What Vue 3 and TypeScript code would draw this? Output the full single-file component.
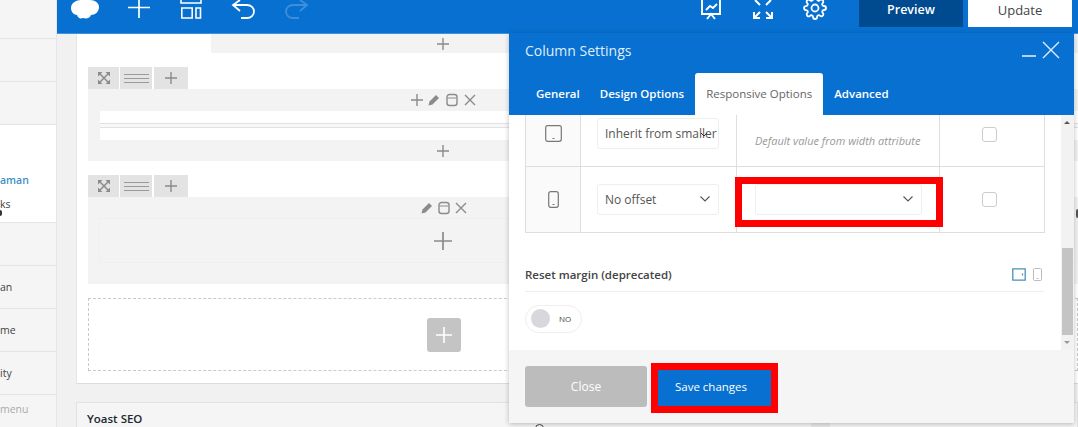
<script setup lang="ts">
const sideTop = [1, 2, 3]
const sideBottom = ['an', 'me', 'ity']
const tabs = ['General', 'Design Options', 'Responsive Options', 'Advanced']
const gearPath = 'M19.4 15a1.65 1.65 0 0 0 .33 1.82l.06.06a2 2 0 0 1 0 2.83 2 2 0 0 1-2.83 0l-.06-.06a1.65 1.65 0 0 0-1.82-.33 1.65 1.65 0 0 0-1 1.51V21a2 2 0 0 1-2 2 2 2 0 0 1-2-2v-.09A1.65 1.65 0 0 0 9 19.4a1.65 1.65 0 0 0-1.82.33l-.06.06a2 2 0 0 1-2.83 0 2 2 0 0 1 0-2.83l.06-.06a1.65 1.65 0 0 0 .33-1.82 1.65 1.65 0 0 0-1.51-1H3a2 2 0 0 1-2-2 2 2 0 0 1 2-2h.09A1.65 1.65 0 0 0 4.6 9a1.65 1.65 0 0 0-.33-1.82l-.06-.06a2 2 0 0 1 0-2.83 2 2 0 0 1 2.83 0l.06.06a1.65 1.65 0 0 0 1.82.33H9a1.65 1.65 0 0 0 1-1.51V3a2 2 0 0 1 2-2 2 2 0 0 1 2 2v.09a1.65 1.65 0 0 0 1 1.51 1.65 1.65 0 0 0 1.82-.33l.06-.06a2 2 0 0 1 2.83 0 2 2 0 0 1 0 2.83l-.06.06a1.65 1.65 0 0 0-.33 1.82V9a1.65 1.65 0 0 0 1.51 1H21a2 2 0 0 1 2 2 2 2 0 0 1-2 2h-.09a1.65 1.65 0 0 0-1.51 1z'
</script>

<template>
  <div class="page">
    <aside class="side">
      <div v-for="s in sideTop" :key="s" class="side-row"></div>
      <div class="side-white">
        <span class="side-link">aman</span>
        <span class="side-ks">ks</span>
        <i class="side-dot"></i>
      </div>
      <div class="side-row"></div>
      <div v-for="s in sideBottom" :key="s" class="side-row labelled">{{ s }}</div>
      <div class="side-menu">menu</div>
    </aside>

    <div class="main">
      <header class="topbar">
        <div class="tools">
          <svg width="28" height="20" viewBox="0 0 28 20"><path d="M0 8C0 3 5 0 10 0h9c5 0 9 3 9 7 0 5-4 8-8 8-1 3-4 4-8 3-3 1-5 0-6-3-3 0-6-3-6-7z" fill="#fff" /></svg>
          <svg width="24" height="24" viewBox="0 0 24 24"><path d="M12 0v18M1 7.500h22" stroke="#fff" stroke-width="1.700" fill="none" /></svg>
          <svg width="24" height="24" viewBox="0 0 24 24"><path d="M2 0v3h20V0M2.800 8h10.400v10H2.800zM17 8h4.500v10H17z" stroke="#fff" stroke-width="1.600" fill="none" /></svg>
          <svg width="26" height="24" viewBox="0 0 26 24"><path d="M9 0 2 5l7 6M2 5h14c4 0 7 3 7 6.500S20 18 16 18h-6" stroke="#fff" stroke-width="1.800" fill="none" /></svg>
          <svg width="26" height="24" viewBox="0 0 26 24"><path d="m17 0 7 5-7 6M24 5H10c-4 0-7 3-7 6.500S6 18 10 18h6" stroke="#3d8fdc" stroke-width="1.800" fill="none" /></svg>
        </div>
        <div class="actions">
          <svg width="24" height="24" viewBox="0 0 24 24"><path d="M3 0v14h18V0M7 10l4-4 3 2 4-4M8 19l4-5 4 5" stroke="#fff" stroke-width="1.900" fill="none" /></svg>
          <svg width="24" height="24" viewBox="0 0 24 24"><path d="M9 5 4 0M15 5l5-5M3 12v6h6M3 18l6-6M21 12v6h-6M21 18l-6-6" stroke="#fff" stroke-width="2" fill="none" /></svg>
          <svg width="24" height="24" viewBox="0 4 24 24"><circle cx="12" cy="12" r="3.500" stroke="#fff" stroke-width="1.800" fill="none" /><path :d="gearPath" stroke="#fff" stroke-width="1.800" fill="none" /></svg>
          <button class="preview"><span>Preview</span></button>
          <button class="update"><span>Update</span></button>
        </div>
      </header>

      <div class="work">
        <section class="card">
          <div class="top-band">
            <svg width="12" height="12" viewBox="0 0 12 12"><path d="M6 0v12M0 6h12" stroke="#8b8b8b" stroke-width="1.400" /></svg>
          </div>

          <div class="group">
            <div class="grip">
              <span class="g-btn expand"><svg width="12" height="12" viewBox="0 0 12 12"><path d="M0 0h4.500L0 4.500zM12 0H7.500L12 4.500zM0 12h4.500L0 7.500zM12 12H7.500l4.500-4.500z" fill="#8b8b8b" /><path d="m2 2 8 8M10 2l-8 8" stroke="#8b8b8b" stroke-width="1.500" /></svg></span>
              <span class="g-btn lines"><i></i><i></i><i></i></span>
              <span class="g-btn add"><svg width="12" height="12" viewBox="0 0 12 12"><path d="M6 0v12M0 6h12" stroke="#8b8b8b" stroke-width="1.400" /></svg></span>
            </div>
            <div class="block">
              <div class="block-tools">
                <svg width="12" height="12" viewBox="0 0 12 12"><path d="M6 0v12M0 6h12" stroke="#8b8b8b" stroke-width="1.400" /></svg>
                <svg width="14" height="14" viewBox="0 0 14 14"><path d="m1.500 12.500 1-4 6.500-6.500 3 3-6.500 6.500z" fill="#8b8b8b" /></svg>
                <svg width="14" height="14" viewBox="0 0 14 14"><rect x="2" y="1.500" width="10" height="11" rx="2.500" stroke="#8b8b8b" stroke-width="1.400" fill="none" /><path d="M2.500 5h9" stroke="#8b8b8b" /></svg>
                <svg width="14" height="14" viewBox="0 0 14 14"><path d="m2 2 10 10M12 2 2 12" stroke="#8b8b8b" stroke-width="1.400" /></svg>
              </div>
              <div class="inner-lines"><div></div><div></div></div>
              <div class="block-plus">
                <svg width="12" height="12" viewBox="0 0 12 12"><path d="M6 0v12M0 6h12" stroke="#8b8b8b" stroke-width="1.400" /></svg>
              </div>
            </div>
          </div>

          <div class="group">
            <div class="grip">
              <span class="g-btn expand"><svg width="12" height="12" viewBox="0 0 12 12"><path d="M0 0h4.500L0 4.500zM12 0H7.500L12 4.500zM0 12h4.500L0 7.500zM12 12H7.500l4.500-4.500z" fill="#8b8b8b" /><path d="m2 2 8 8M10 2l-8 8" stroke="#8b8b8b" stroke-width="1.500" /></svg></span>
              <span class="g-btn lines"><i></i><i></i><i></i></span>
              <span class="g-btn add"><svg width="12" height="12" viewBox="0 0 12 12"><path d="M6 0v12M0 6h12" stroke="#8b8b8b" stroke-width="1.400" /></svg></span>
            </div>
            <div class="block tall">
              <div class="block-tools shifted">
                <svg width="14" height="14" viewBox="0 0 14 14"><path d="m1.500 12.500 1-4 6.500-6.500 3 3-6.500 6.500z" fill="#8b8b8b" /></svg>
                <svg width="14" height="14" viewBox="0 0 14 14"><rect x="2" y="1.500" width="10" height="11" rx="2.500" stroke="#8b8b8b" stroke-width="1.400" fill="none" /><path d="M2.500 5h9" stroke="#8b8b8b" /></svg>
                <svg width="14" height="14" viewBox="0 0 14 14"><path d="m2 2 10 10M12 2 2 12" stroke="#8b8b8b" stroke-width="1.400" /></svg>
              </div>
              <div class="inner-box">
                <svg width="18" height="18" viewBox="0 0 18 18"><path d="M9 0v18M0 9h18" stroke="#8b8b8b" stroke-width="1.700" /></svg>
              </div>
            </div>
          </div>

          <div class="dropzone">
            <span class="add-box"><svg width="18" height="18" viewBox="0 0 18 18"><path d="M9 1v16M1 9h16" stroke="#fff" stroke-width="1.600" /></svg></span>
          </div>
        </section>
        <section class="yoast">
          Yoast SEO
          <i class="yoast-arc"></i>
          <i class="yoast-band"></i>
        </section>
        <i class="edge-dot"></i>

        <div class="panel">
          <div class="p-head">
            <div class="p-title">
              <span>Column Settings</span>
              <span class="p-win">
                <svg width="14" height="18" viewBox="0 0 14 18"><path d="M0 15h14" stroke="#dfeefb" stroke-width="1.600" /></svg>
                <svg width="18" height="18" viewBox="0 0 18 18"><path d="m1 1 16 16M17 1 1 17" stroke="#dfeefb" stroke-width="1.400" /></svg>
              </span>
            </div>
            <nav class="p-tabs">
              <span v-for="t in tabs" :key="t" class="tab" :class="{ active: t === 'Responsive Options' }">{{ t }}</span>
            </nav>
          </div>

          <div class="p-body">
            <div class="scroll-col">
              <table class="offsets">
                <colgroup><col class="w1" /><col class="w2" /><col class="w3" /><col class="w4" /></colgroup>
                <tbody>
                  <tr class="r1">
                    <td class="c-ico"><svg width="17" height="17" viewBox="0 0 17 17"><rect x=".7" y=".7" width="15.600" height="15.600" rx="2" fill="none" stroke="#777" stroke-width="1.200" /><path d="M7.500 13.500h2" stroke="#777" /></svg></td>
                    <td class="c-sel"><span class="sel">Inherit from smaller<svg class="over" width="8" height="6" viewBox="0 0 8 6"><path d="m1 1 3 3 3-3" stroke="#333" fill="none" /></svg></span></td>
                    <td class="c-width"><em>Default value from width attribute</em></td>
                    <td class="c-check"><span class="check"></span></td>
                  </tr>
                  <tr class="r2">
                    <td class="c-ico"><svg width="11" height="17" viewBox="0 0 11 17"><rect x=".7" y=".7" width="9.600" height="15.600" rx="2" fill="none" stroke="#777" stroke-width="1.200" /><path d="M4.500 13.500h2" stroke="#777" /></svg></td>
                    <td class="c-sel"><span class="sel">No offset<svg width="12" height="8" viewBox="0 0 12 8"><path d="m1.500 1.500 4.500 4.500 4.500-4.500" stroke="#555" stroke-width="1.100" fill="none" /></svg></span></td>
                    <td class="c-width"><span class="sel wide"><svg width="12" height="8" viewBox="0 0 12 8"><path d="m1.500 1.500 4.500 4.500 4.500-4.500" stroke="#555" stroke-width="1.100" fill="none" /></svg></span></td>
                    <td class="c-check"><span class="check"></span></td>
                  </tr>
                </tbody>
              </table>

              <div class="reset">
                <span>Reset margin (deprecated)</span>
                <span class="devices">
                  <svg width="14" height="13" viewBox="0 0 14 13"><path d="M.8.800h12.400v11.400H.8zM10.500 5.500v2" fill="none" stroke="#4b8fb8" stroke-width="1.300" /></svg>
                  <svg width="9" height="13" viewBox="0 0 9 13"><rect x=".5" y=".5" width="8" height="12" rx="1" fill="none" stroke="#bbb" /><path d="M3.500 10.500h2" stroke="#bbb" /></svg>
                </span>
              </div>
              <div class="toggle"><i></i><span>NO</span></div>
            </div>
            <div class="scrollbar">
              <span class="arrow up"></span>
              <span class="track"><i></i></span>
              <span class="arrow down"></span>
            </div>
          </div>

          <footer class="p-foot">
            <button class="close">Close</button>
            <button class="save">Save changes</button>
          </footer>
        </div>

        <span class="highlight width-mark"></span>
        <span class="highlight save-mark"></span>
      </div>
    </div>
  </div>
</template>

<style>
html, body { margin: 0; overflow: hidden; }
</style>

<style scoped>
.page { display: flex; width: 1078px; height: 427px; overflow: hidden; background: #f1f1f1; font-family: "Open Sans", sans-serif; color: #444; }
.side { width: 57px; flex: none; display: flex; flex-direction: column; background: #f5f5f5; border-right: 1px solid #e6e6e6; box-sizing: border-box; margin-top: -4px; font-size: 10.500px; overflow: hidden; }
.side-row { height: 43px; flex: none; box-sizing: border-box; border-bottom: 1px solid #e4e4e4; display: flex; align-items: center; }
.side-white { height: 98px; flex: none; background: #fff; border-bottom: 1px solid #e4e4e4; box-sizing: border-box; position: relative; display: flex; flex-direction: column; align-items: flex-start; padding-top: 48px; line-height: 14px; }
.side-link { color: #3f8fc9; font-weight: 600; }
.side-ks { margin-top: 10px; }
.side-dot { position: absolute; left: 0; top: 85px; width: 2px; height: 6px; background: #333; border-radius: 0 3px 3px 0; }
.side-menu { color: #aaa; padding-top: 7px; white-space: nowrap; }

.main { flex: 1; min-width: 0; display: flex; flex-direction: column; }
.topbar { height: 34px; flex: none; background: #0870d0; border-bottom: 1px solid #3d94de; box-sizing: border-box; display: flex; justify-content: space-between; overflow: hidden; }
.tools { display: flex; align-items: flex-start; gap: 28px; padding-left: 14px; }
.tools svg:last-child { margin-left: -2px; }
.actions { display: flex; align-items: flex-start; gap: 28px; }
.preview, .update { height: 27px; width: 104px; border: 0; padding: 0 0 8px; font: 600 12.500px/18px "Open Sans", sans-serif; }
.preview { background: #004a8f; color: #fff; margin-left: 4px; }
.update { background: #fff; color: #444; margin-left: -23px; margin-right: 6px; font-weight: 400; font-size: 13px; }

.work { flex: 1; position: relative; padding-left: 19px; min-height: 0; }
.card { height: 350px; background: #fff; border-bottom: 1px solid #dcdcdc; border-left: 1px solid #e6e6e6; box-sizing: border-box; padding-left: 11px; }
.top-band { height: 19px; margin-left: 123px; background: #f3f3f3; display: flex; padding-left: 226px; align-items: center; }
.group { display: flex; flex-direction: column; margin-top: 14px; }
.grip { display: flex; gap: 1px; height: 22px; }
.g-btn { height: 22px; background: #e3e3e3; display: flex; align-items: center; justify-content: center; }
.g-btn.expand { width: 31px; }
.g-btn.lines { width: 32px; flex-direction: column; gap: 3px; }
.g-btn.lines i { display: block; width: 25px; height: 1px; background: #9a9a9a; }
.g-btn.add { width: 34px; margin-left: 1px; }
.block { height: 72px; background: #f3f3f3; position: relative; }
.block.tall { height: 87px; }
.block-tools { display: flex; gap: 4px; height: 22px; align-items: center; padding-left: 323px; }
.block-tools.shifted { padding-left: 332px; gap: 3px; }
.inner-lines { margin-left: 12px; height: 29px; background: #f8f8f8; }
.inner-lines div { height: 12px; background: #fff; }
.inner-lines div:first-child { border-bottom: 1px solid #e2e2e2; margin-bottom: 3px; }
.inner-lines div:last-child { border-top: 1px solid #e2e2e2; }
.block-plus { height: 21px; padding-left: 349px; display: flex; align-items: center; }
.inner-box { margin: -1px 0 0 11px; height: 45px; border: 1px solid #efefef; display: flex; align-items: center; padding-left: 334px; box-sizing: border-box; }
.dropzone { margin-top: 14px; height: 73px; border: 1px dashed #c9c9c9; box-sizing: border-box; display: flex; align-items: center; padding-left: 338px; }
.add-box { width: 34px; height: 34px; background: #c4c4c4; border-radius: 3px; display: flex; align-items: center; justify-content: center; }
.yoast { position: relative; margin-top: 18px; background: #f5f5f5; border: 1px solid #e2e2e2; height: 41px; box-sizing: border-box; padding: 7px 10px; font: 600 11.500px/17px "Open Sans", sans-serif; color: #23282d; }
.yoast-arc { position: absolute; left: 458px; top: 21px; width: 9px; height: 9px; border: 1.500px solid #444; border-radius: 50%; box-sizing: border-box; }
.yoast-band { position: absolute; left: 734px; top: 0; width: 19px; height: 40px; background: #e8e8e8; }
.edge-dot { position: absolute; right: 0; top: 175px; width: 2px; height: 9px; background: #555; border-radius: 2px 0 0 2px; }

.panel { position: absolute; left: 452px; top: -1px; width: 565px; height: 390px; background: #fff; display: flex; flex-direction: column; box-shadow: 0 1px 5px rgba(0,0,0,.25); }
.p-head { background: #0870d0; height: 82px; flex: none; color: #fff; box-sizing: border-box; padding-left: 16px; display: flex; flex-direction: column; }
.p-title { display: flex; justify-content: space-between; align-items: center; height: 34px; font-size: 14px; color: #dfeefb; }
.p-win { display: flex; gap: 6px; align-items: center; margin-right: 14px; }
.p-tabs { display: flex; align-items: flex-end; height: 48px; font: 600 11.500px "Open Sans", sans-serif; }
.tab { height: 42px; box-sizing: border-box; line-height: 42px; padding: 0 11px; }
.tab:first-child { padding-right: 9px; }
.tab.active { background: #fff; color: #666; border-radius: 3px 3px 0 0; font-weight: 400; }

.p-body { flex: 1; min-height: 0; display: flex; }
.scroll-col { flex: 1; min-width: 0; padding-left: 16px; }
.offsets { width: 519px; border-collapse: collapse; table-layout: fixed; font-size: 12px; }
.w1 { width: 55px; }
.w2 { width: 156px; }
.w3 { width: 203px; }
.w4 { width: 105px; }
.offsets td { border: 1px solid #dedede; padding: 0; vertical-align: middle; }
.offsets tr:first-child td { border-top: 0; }
.r1 { height: 51px; }
.r2 { height: 66px; }
.c-ico { background: #fafafa; }
.c-ico svg { display: block; margin: 0 auto; }
.r1 .c-ico svg { margin-bottom: 14px; }
.c-sel { padding-left: 16px !important; }
.c-width { padding-left: 18px !important; color: #999; font-size: 11px; }
.c-check { padding-right: 5px !important; }
.sel { display: flex; box-sizing: border-box; width: 122px; height: 31px; border: 1px solid #eee; border-radius: 3px; align-items: center; justify-content: space-between; padding: 0 7px; color: #555; background: #fff; white-space: nowrap; font-size: 12px; position: relative; }
.r1 .sel { margin-bottom: 14px; }
.sel .over { position: absolute; right: 10px; top: 13px; }
.sel.wide { width: 167px; justify-content: flex-end; }
.check { display: block; width: 15px; height: 15px; margin: 0 auto; border: 1px solid #ccc; border-radius: 3px; box-sizing: border-box; }
.r1 .check { margin-bottom: 11px; }
.reset { display: flex; justify-content: space-between; align-items: center; width: 519px; margin-top: 33px; padding-bottom: 8px; border-bottom: 1px solid #eee; font-weight: 600; font-size: 11.500px; color: #444; height: 17px; }
.devices { display: flex; gap: 7px; margin-right: 2px; }
.toggle { margin-top: 13px; width: 57px; height: 28px; box-sizing: border-box; border: 1px solid #eee; border-radius: 14px; display: flex; align-items: center; gap: 9px; padding-left: 5px; font-size: 8px; }
.toggle i { width: 19px; height: 19px; background: #d8d8dc; border-radius: 50%; }
.scrollbar { width: 13px; flex: none; background: #f2f2f2; display: flex; flex-direction: column; }
.arrow { display: block; position: relative; flex: none; }
.arrow.up { height: 17px; }
.arrow.down { height: 15px; }
.arrow::after { content: ""; position: absolute; left: 3px; border-left: 3px solid transparent; border-right: 3px solid transparent; }
.arrow.up::after { top: 6px; border-bottom: 3px solid #555; }
.arrow.down::after { top: 6px; border-top: 3px solid #999; }
.track { flex: 1; position: relative; }
.track i { position: absolute; left: 1px; right: 1px; bottom: 0; height: 87px; background: #c4c4c4; }

.p-foot { height: 73px; flex: none; background: #f5f5f5; padding: 16px 0 0 16px; box-sizing: border-box; display: flex; gap: 11px; align-items: flex-start; }
.p-foot button { border: 0; font: 400 11.500px "Open Sans", sans-serif; color: #fff; }
.close { width: 122px; height: 41px; padding: 0; background: #bcbcbc; border-radius: 3px; font-size: 12px !important; }
.save { width: 114px; height: 36px; margin-top: 4px; padding: 0 8px 3px 0; background: #0870d0; }

.highlight { position: absolute; border: 7px solid #f00; box-sizing: border-box; }
.width-mark { left: 678px; top: 143px; width: 208px; height: 50px; }
.save-mark { left: 594px; top: 329px; width: 127px; height: 50px; }
</style>
